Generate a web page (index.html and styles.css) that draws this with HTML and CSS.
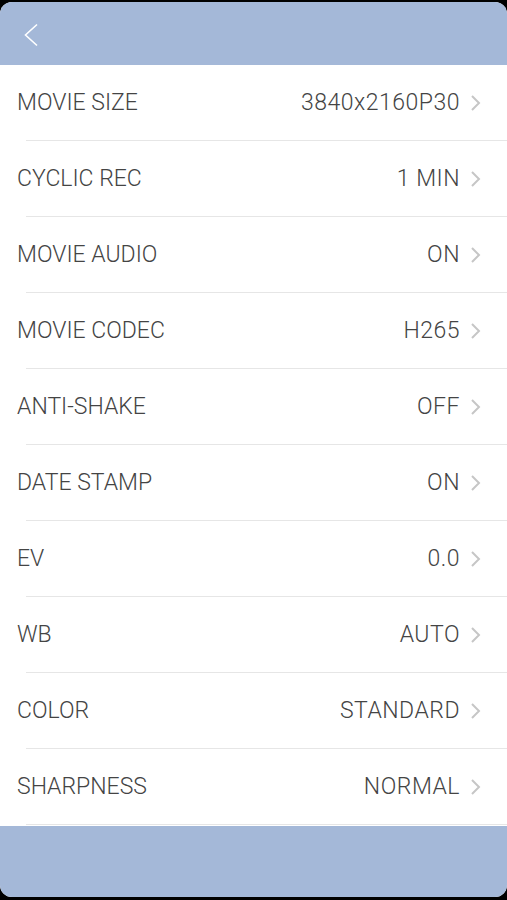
FILE: index.html
```html
<!DOCTYPE html>
<html lang="en">
<head>
    <meta charset="UTF-8">
    <meta name="viewport" content="width=device-width, initial-scale=1.0">
    <title>Movie Settings</title>
    <link rel="stylesheet" href="styles.css">
</head>
<body>

    <div class="screen">

        <!-- Top Bar -->
        <header class="top-bar">
            <button class="back-button" aria-label="Back">
                <svg width="18" height="24" viewBox="0 0 18 24">
                    <path d="M15 1.5 L3.5 12 L15 22.5" fill="none" stroke="#fff" stroke-width="1.6"/>
                </svg>
            </button>
        </header>

        <!-- Settings List -->
        <ul class="settings-list">
            <li class="setting-row">
                <span class="setting-name">MOVIE SIZE</span>
                <span class="setting-value">3840x2160P30</span>
                <svg class="chevron" width="12" height="16" viewBox="0 0 12 16"><path d="M2 1 L9 8 L2 15" fill="none" stroke="#c6c6c6" stroke-width="2"/></svg>
            </li>
            <li class="setting-row">
                <span class="setting-name">CYCLIC REC</span>
                <span class="setting-value">1 MIN</span>
                <svg class="chevron" width="12" height="16" viewBox="0 0 12 16"><path d="M2 1 L9 8 L2 15" fill="none" stroke="#c6c6c6" stroke-width="2"/></svg>
            </li>
            <li class="setting-row">
                <span class="setting-name">MOVIE AUDIO</span>
                <span class="setting-value">ON</span>
                <svg class="chevron" width="12" height="16" viewBox="0 0 12 16"><path d="M2 1 L9 8 L2 15" fill="none" stroke="#c6c6c6" stroke-width="2"/></svg>
            </li>
            <li class="setting-row">
                <span class="setting-name">MOVIE CODEC</span>
                <span class="setting-value">H265</span>
                <svg class="chevron" width="12" height="16" viewBox="0 0 12 16"><path d="M2 1 L9 8 L2 15" fill="none" stroke="#c6c6c6" stroke-width="2"/></svg>
            </li>
            <li class="setting-row">
                <span class="setting-name">ANTI-SHAKE</span>
                <span class="setting-value">OFF</span>
                <svg class="chevron" width="12" height="16" viewBox="0 0 12 16"><path d="M2 1 L9 8 L2 15" fill="none" stroke="#c6c6c6" stroke-width="2"/></svg>
            </li>
            <li class="setting-row">
                <span class="setting-name">DATE STAMP</span>
                <span class="setting-value">ON</span>
                <svg class="chevron" width="12" height="16" viewBox="0 0 12 16"><path d="M2 1 L9 8 L2 15" fill="none" stroke="#c6c6c6" stroke-width="2"/></svg>
            </li>
            <li class="setting-row">
                <span class="setting-name">EV</span>
                <span class="setting-value">0.0</span>
                <svg class="chevron" width="12" height="16" viewBox="0 0 12 16"><path d="M2 1 L9 8 L2 15" fill="none" stroke="#c6c6c6" stroke-width="2"/></svg>
            </li>
            <li class="setting-row">
                <span class="setting-name">WB</span>
                <span class="setting-value">AUTO</span>
                <svg class="chevron" width="12" height="16" viewBox="0 0 12 16"><path d="M2 1 L9 8 L2 15" fill="none" stroke="#c6c6c6" stroke-width="2"/></svg>
            </li>
            <li class="setting-row">
                <span class="setting-name">COLOR</span>
                <span class="setting-value">STANDARD</span>
                <svg class="chevron" width="12" height="16" viewBox="0 0 12 16"><path d="M2 1 L9 8 L2 15" fill="none" stroke="#c6c6c6" stroke-width="2"/></svg>
            </li>
            <li class="setting-row">
                <span class="setting-name">SHARPNESS</span>
                <span class="setting-value">NORMAL</span>
                <svg class="chevron" width="12" height="16" viewBox="0 0 12 16"><path d="M2 1 L9 8 L2 15" fill="none" stroke="#c6c6c6" stroke-width="2"/></svg>
            </li>
        </ul>

        <!-- Bottom Bar -->
        <footer class="bottom-bar"></footer>

    </div>

</body>
</html>
```

FILE: styles.css
```css
/* --- Base --- */
html, body {
    margin: 0;
    padding: 0;
    height: 100%;
}

body {
    background-color: #000;
    font-family: 'Roboto', 'Liberation Sans', sans-serif;
    font-weight: 300;
    color: #444;
    overflow: hidden;
}

/* --- Phone Screen --- */
.screen {
    margin-top: 2px;
    height: 895px;
    display: flex;
    flex-direction: column;
    background-color: #fff;
    border-radius: 12px;
    overflow: hidden;
}

/* --- Top Bar --- */
.top-bar {
    height: 63px;
    flex-shrink: 0;
    background-color: #a4b8d8;
    display: flex;
    align-items: center;
    padding-left: 22px;
}

.back-button {
    background: none;
    border: none;
    padding: 0;
    margin-top: 3px;
    display: flex;
    cursor: pointer;
}

/* --- Settings List --- */
.settings-list {
    list-style: none;
    margin: 0;
    padding: 0;
    flex: 1;
}

.setting-row {
    height: 75px;
    display: flex;
    align-items: center;
    padding-left: 17px;
    padding-right: 25px;
    position: relative;
    border-bottom: 1px solid transparent;
    font-size: 23px;
}

/* inset separator line */
.setting-row::after {
    content: "";
    position: absolute;
    left: 26px;
    right: 0;
    bottom: -1px;
    height: 1px;
    background-color: #e6e6e6;
}

.setting-name {
    flex: 1;
}

.setting-value {
    margin-right: 10px;
    letter-spacing: 0.5px;
}

.chevron {
    display: block;
}

/* --- Bottom Bar --- */
.bottom-bar {
    height: 71px;
    flex-shrink: 0;
    background-color: #a4b8d8;
}
```
